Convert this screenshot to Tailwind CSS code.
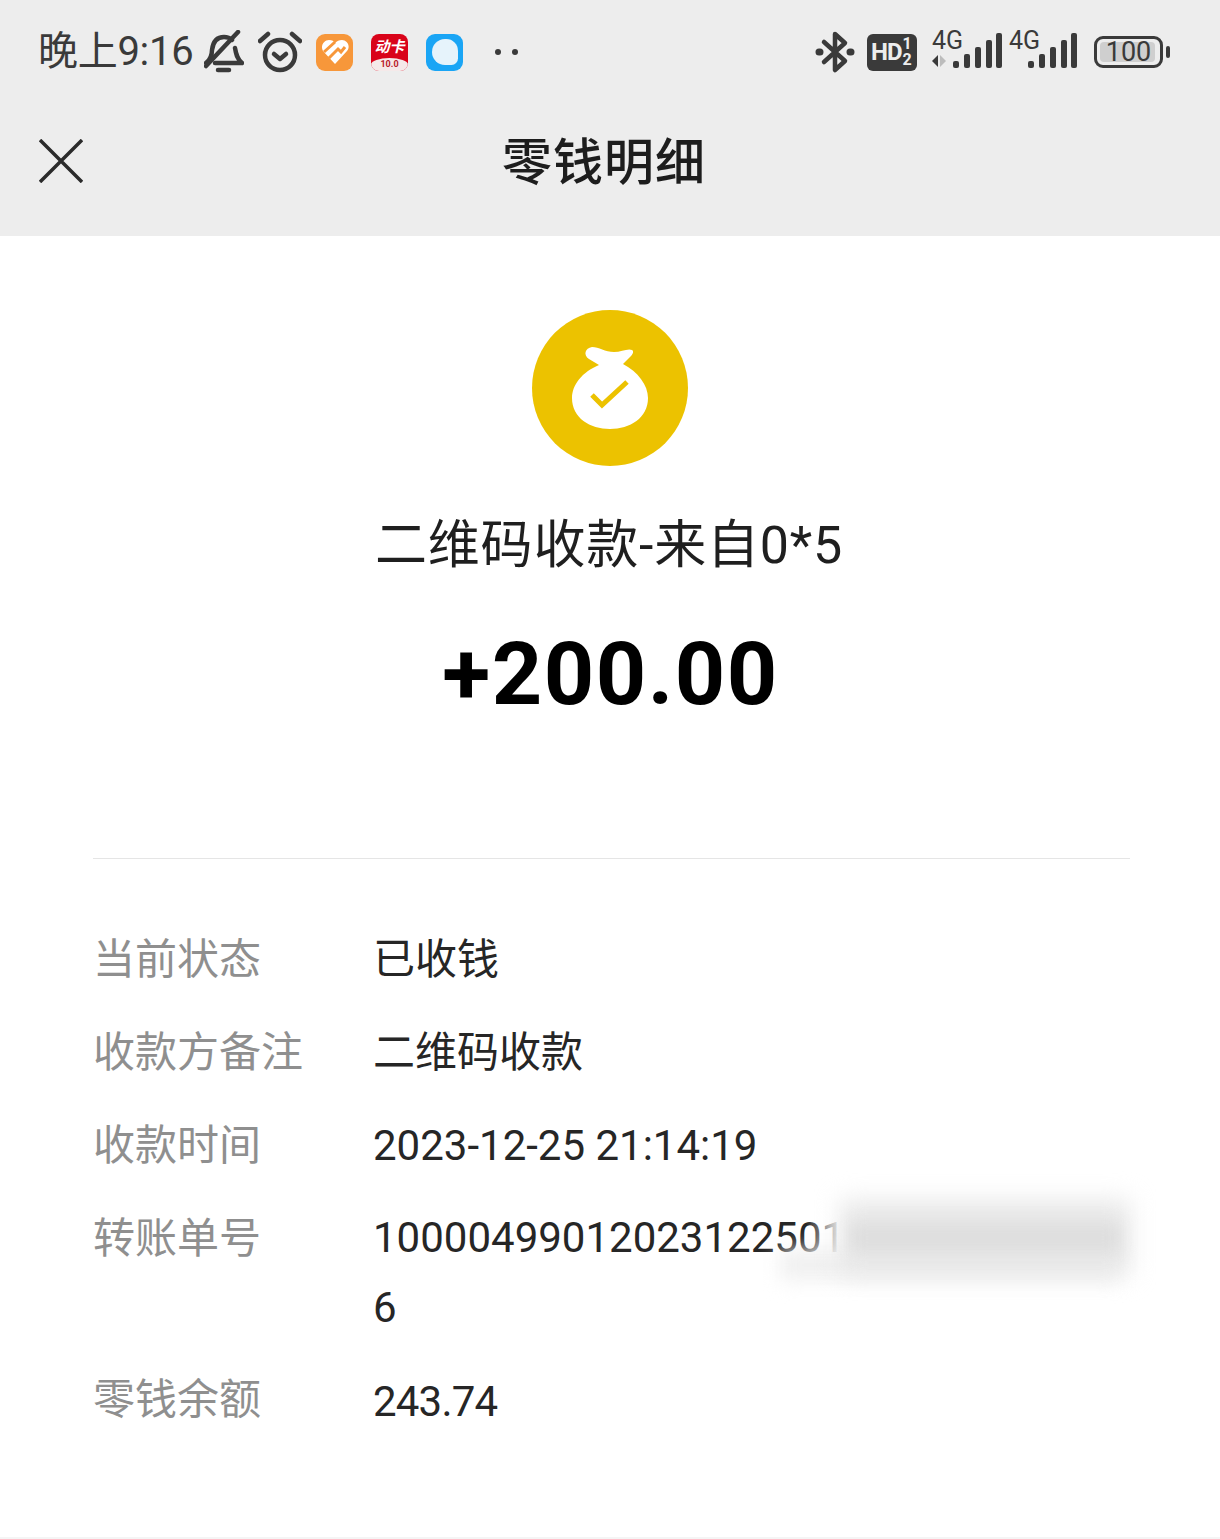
<!DOCTYPE html>
<html lang="zh-CN">
<head>
    <meta charset="UTF-8">
    <title>零钱明细</title>
    <script src="https://cdn.jsdelivr.net/npm/@tailwindcss/browser@4"></script>
</head>
<body class="bg-white w-[1220px] h-[1539px] overflow-hidden font-['Roboto','Noto_Sans_CJK_SC',sans-serif]">
    <!-- Header -->
    <header class="bg-[#ededed] h-[236px]">
        <!-- Status bar -->
        <div class="h-[104px] flex items-center pl-[38px] pr-[50px] text-[#3a3a3a]">
            <span class="text-[40px] leading-none whitespace-nowrap w-[166px] tracking-[-0.3px]">晚上9:16</span>
            <!-- muted bell -->
            <svg class="w-[40px] h-[44px]" viewBox="0 0 40 44" fill="none" stroke="#3a3a3a" stroke-width="4.5" stroke-linecap="round" stroke-linejoin="round">
                <path d="M2 33c4-3 6-7 6-13 1-8 5-13 12-13 3 0 6 1 8 3"/>
                <path d="M31 18c1 6 2 11 7 15H11"/>
                <path d="M2 36 34 2"/>
                <path d="M14 40h11"/>
            </svg>
            <!-- alarm -->
            <svg class="ml-[14px] w-[44px] h-[44px]" viewBox="0 0 44 44" fill="none" stroke="#3a3a3a" stroke-width="4.5" stroke-linecap="round" stroke-linejoin="round">
                <circle cx="22" cy="25" r="15"/>
                <path d="M2 11 10 4M42 11 34 4"/>
                <path d="m16 24 6 5 6-5"/>
            </svg>
            <!-- orange app -->
            <div class="ml-[14px] w-[37px] h-[37px] rounded-[9px] bg-[#f7973a] flex items-center justify-center">
                <svg class="w-[28px] h-[26px]" viewBox="0 0 28 26" fill="none">
                    <path d="M14 25 2 12C-1 7 3 1 8 1c3 0 5 1 6 3 2-2 4-3 7-3 5 0 9 6 5 11Z" fill="#fff"/>
                    <path d="M3 13 14 3M8 19 17 10 20 13 24 8" stroke="#f7973a" stroke-width="3"/>
                </svg>
            </div>
            <!-- red app -->
            <div class="ml-[18px] w-[37px] h-[37px] rounded-[8px] bg-[#d9031a] flex flex-col items-center overflow-hidden">
                <span class="text-white text-[15px] leading-none mt-[6px] font-bold italic whitespace-nowrap">动卡</span>
                <span class="mt-auto w-full h-[13px] bg-[#f5e9e9] rounded-t-[50%] text-[#b8202a] text-[9px] leading-[13px] text-center font-bold">10.0</span>
            </div>
            <!-- blue app -->
            <div class="ml-[18px] w-[37px] h-[37px] rounded-[9px] bg-[#1aa5f5] flex items-center justify-center">
                <div class="w-[26px] h-[26px] bg-[#e6f3fb] rounded-tl-[50%] rounded-tr-[45%] rounded-bl-[50%] rounded-br-[25%]"></div>
            </div>
            <div class="ml-[32px] flex gap-[11px]">
                <span class="w-[6px] h-[6px] rounded-full bg-[#3a3a3a]"></span>
                <span class="w-[6px] h-[6px] rounded-full bg-[#3a3a3a]"></span>
            </div>

            <div class="ml-auto flex items-center">
                <!-- bluetooth -->
                <svg class="w-[40px] h-[44px]" viewBox="0 0 40 44" fill="none" stroke="#3a3a3a" stroke-width="4.5" stroke-linecap="round" stroke-linejoin="round">
                    <path d="M9 12 30 31 20 40V4l10 9L9 32"/>
                    <path d="M4 22h1M35 22h1" stroke-width="7"/>
                </svg>
                <!-- HD badge -->
                <div class="ml-[12px] w-[50px] h-[37px] rounded-[6px] bg-[#3a3a3a] text-[#ededed] flex items-center pl-[4px] font-bold">
                    <span class="text-[24px] leading-none tracking-[-1px]">HD</span>
                    <span class="ml-[1px] flex flex-col items-center text-[16px] leading-[16px]"><span>1</span><span>2</span></span>
                </div>
                <!-- SIM 1 -->
                <div class="ml-[15px] relative w-[70px] h-[44px]">
                    <span class="absolute left-[0px] top-[-2px] text-[25px] leading-none">4G</span>
                    <svg class="absolute left-0 top-0 w-[70px] h-[44px]" viewBox="0 0 70 44" fill="#3a3a3a">
                        <path d="M6 25v12L0 31Z"/>
                        <path d="M8 25v12l6-6Z" fill="#bcbcbc"/>
                        <rect x="21" y="31" width="6" height="7" rx="2"/>
                        <rect x="32" y="24" width="6" height="14" rx="2"/>
                        <rect x="43" y="17" width="6" height="21" rx="2"/>
                        <rect x="54" y="10" width="6" height="28" rx="2"/>
                        <rect x="64" y="3" width="6" height="35" rx="2"/>
                    </svg>
                </div>
                <!-- SIM 2 -->
                <div class="ml-[7px] relative w-[70px] h-[44px]">
                    <span class="absolute left-[0px] top-[-2px] text-[25px] leading-none">4G</span>
                    <svg class="absolute left-0 top-0 w-[70px] h-[44px]" viewBox="0 0 70 44" fill="#3a3a3a">
                        <rect x="19" y="31" width="6" height="7" rx="2"/>
                        <rect x="30" y="24" width="6" height="14" rx="2"/>
                        <rect x="41" y="17" width="6" height="21" rx="2"/>
                        <rect x="52" y="10" width="6" height="28" rx="2"/>
                        <rect x="62" y="3" width="6" height="35" rx="2"/>
                    </svg>
                </div>
                <!-- battery -->
                <div class="ml-[15px] w-[69px] h-[32px] rounded-[9px] border-[3px] border-[#3a3a3a] p-[3px] relative flex items-center justify-center">
                    <div class="absolute inset-[3px] right-[5px] bg-[#cfcfcf] rounded-[4px]"></div>
                    <span class="relative text-[27px] leading-none">100</span>
                </div>
                <div class="ml-[3px] w-[4px] h-[12px] rounded-full bg-[#3a3a3a]"></div>
            </div>
        </div>
        <!-- Nav -->
        <div class="relative h-[132px] flex items-center justify-center">
            <svg class="absolute left-[39px] top-[35px] w-[44px] h-[44px]" viewBox="0 0 44 44" fill="none" stroke="#2b2b2b" stroke-width="3.5">
                <path d="M1 1 43 43M43 1 1 43"/>
            </svg>
            <h1 class="text-[50px] leading-none font-medium text-[#1d1d1d] mt-[-14px] ml-[-12px] tracking-[1px]">零钱明细</h1>
        </div>
    </header>

    <main class="pl-[93px] pr-[90px]">
        <!-- Summary -->
        <section class="flex flex-col items-center h-[623px] border-b border-[#e5e5e5] pt-[74px]">
            <div class="w-[156px] h-[156px] rounded-full bg-[#ecc200] flex items-center justify-center mr-[4px]">
                <svg class="w-[76px] h-[84px] mt-[2px]" viewBox="0 0 76 84" fill="none">
                    <path d="M20 0C27 0 33 5 42 5 49 5 56 1 60 3 62 4 61 7 59 9L51 17C66 25 76 38 76 51 76 71 58 82 38 82 18 82 0 71 0 51 0 38 10 25 27 18L17 12C11 8 13 1 20 0Z" fill="#fff"/>
                    <path d="M20 48 30 58 55 35" stroke="#ecc200" stroke-width="5"/>
                </svg>
            </div>
            <p class="mt-[50px] text-[52px] leading-[60px] text-[#1f1f1f] whitespace-nowrap tracking-[0.8px] mr-[5px]">二维码收款-来自0*5</p>
            <p class="mt-[48px] text-[88px] leading-[100px] font-bold text-black tracking-[1.5px] ml-[-2px]">+200.00</p>
        </section>

        <!-- Details -->
        <dl class="pt-[70px] text-[42px] leading-[62px]">
            <div class="flex h-[93px]">
                <dt class="w-[280px] text-[#8f8f8f] shrink-0">当前状态</dt>
                <dd class="text-[#262626]">已收钱</dd>
            </div>
            <div class="flex h-[93px]">
                <dt class="w-[280px] text-[#8f8f8f] shrink-0">收款方备注</dt>
                <dd class="text-[#262626]">二维码收款</dd>
            </div>
            <div class="flex h-[93px]">
                <dt class="w-[280px] text-[#8f8f8f] shrink-0">收款时间</dt>
                <dd class="text-[#262626]">2023-12-25 21:14:19</dd>
            </div>
            <div class="flex h-[161px]">
                <dt class="w-[280px] text-[#8f8f8f] shrink-0">转账单号</dt>
                <dd class="text-[#262626] relative leading-[70px] mt-[-5px] whitespace-nowrap">
                    <div>10000499012023122501</div>
                    <div>6</div>
                </dd>
            </div>
            <div class="flex h-[93px]">
                <dt class="w-[280px] text-[#8f8f8f] shrink-0">零钱余额</dt>
                <dd class="text-[#262626] mt-[2px] tracking-[-0.8px]">243.74</dd>
            </div>
        </dl>
    </main>

    <!-- Blurred-out part of the transfer number -->
    <div class="absolute left-[806px] top-[1205px] w-[40px] h-[70px] bg-gradient-to-r from-white/0 to-white"></div>
    <div class="absolute left-[780px] top-[1250px] w-[340px] h-[30px] bg-[#f0f0f0] blur-[10px]"></div>
    <div class="absolute left-[840px] top-[1200px] w-[290px] h-[74px] bg-[#e8e8e8] blur-[12px]"></div>
    <div class="absolute left-[850px] top-[1224px] w-[270px] h-[28px] bg-[#dedede] blur-[8px]"></div>
    <div class="absolute left-0 bottom-0 w-full h-[2px] bg-[#f5f5f5]"></div>
</body>
</html>
